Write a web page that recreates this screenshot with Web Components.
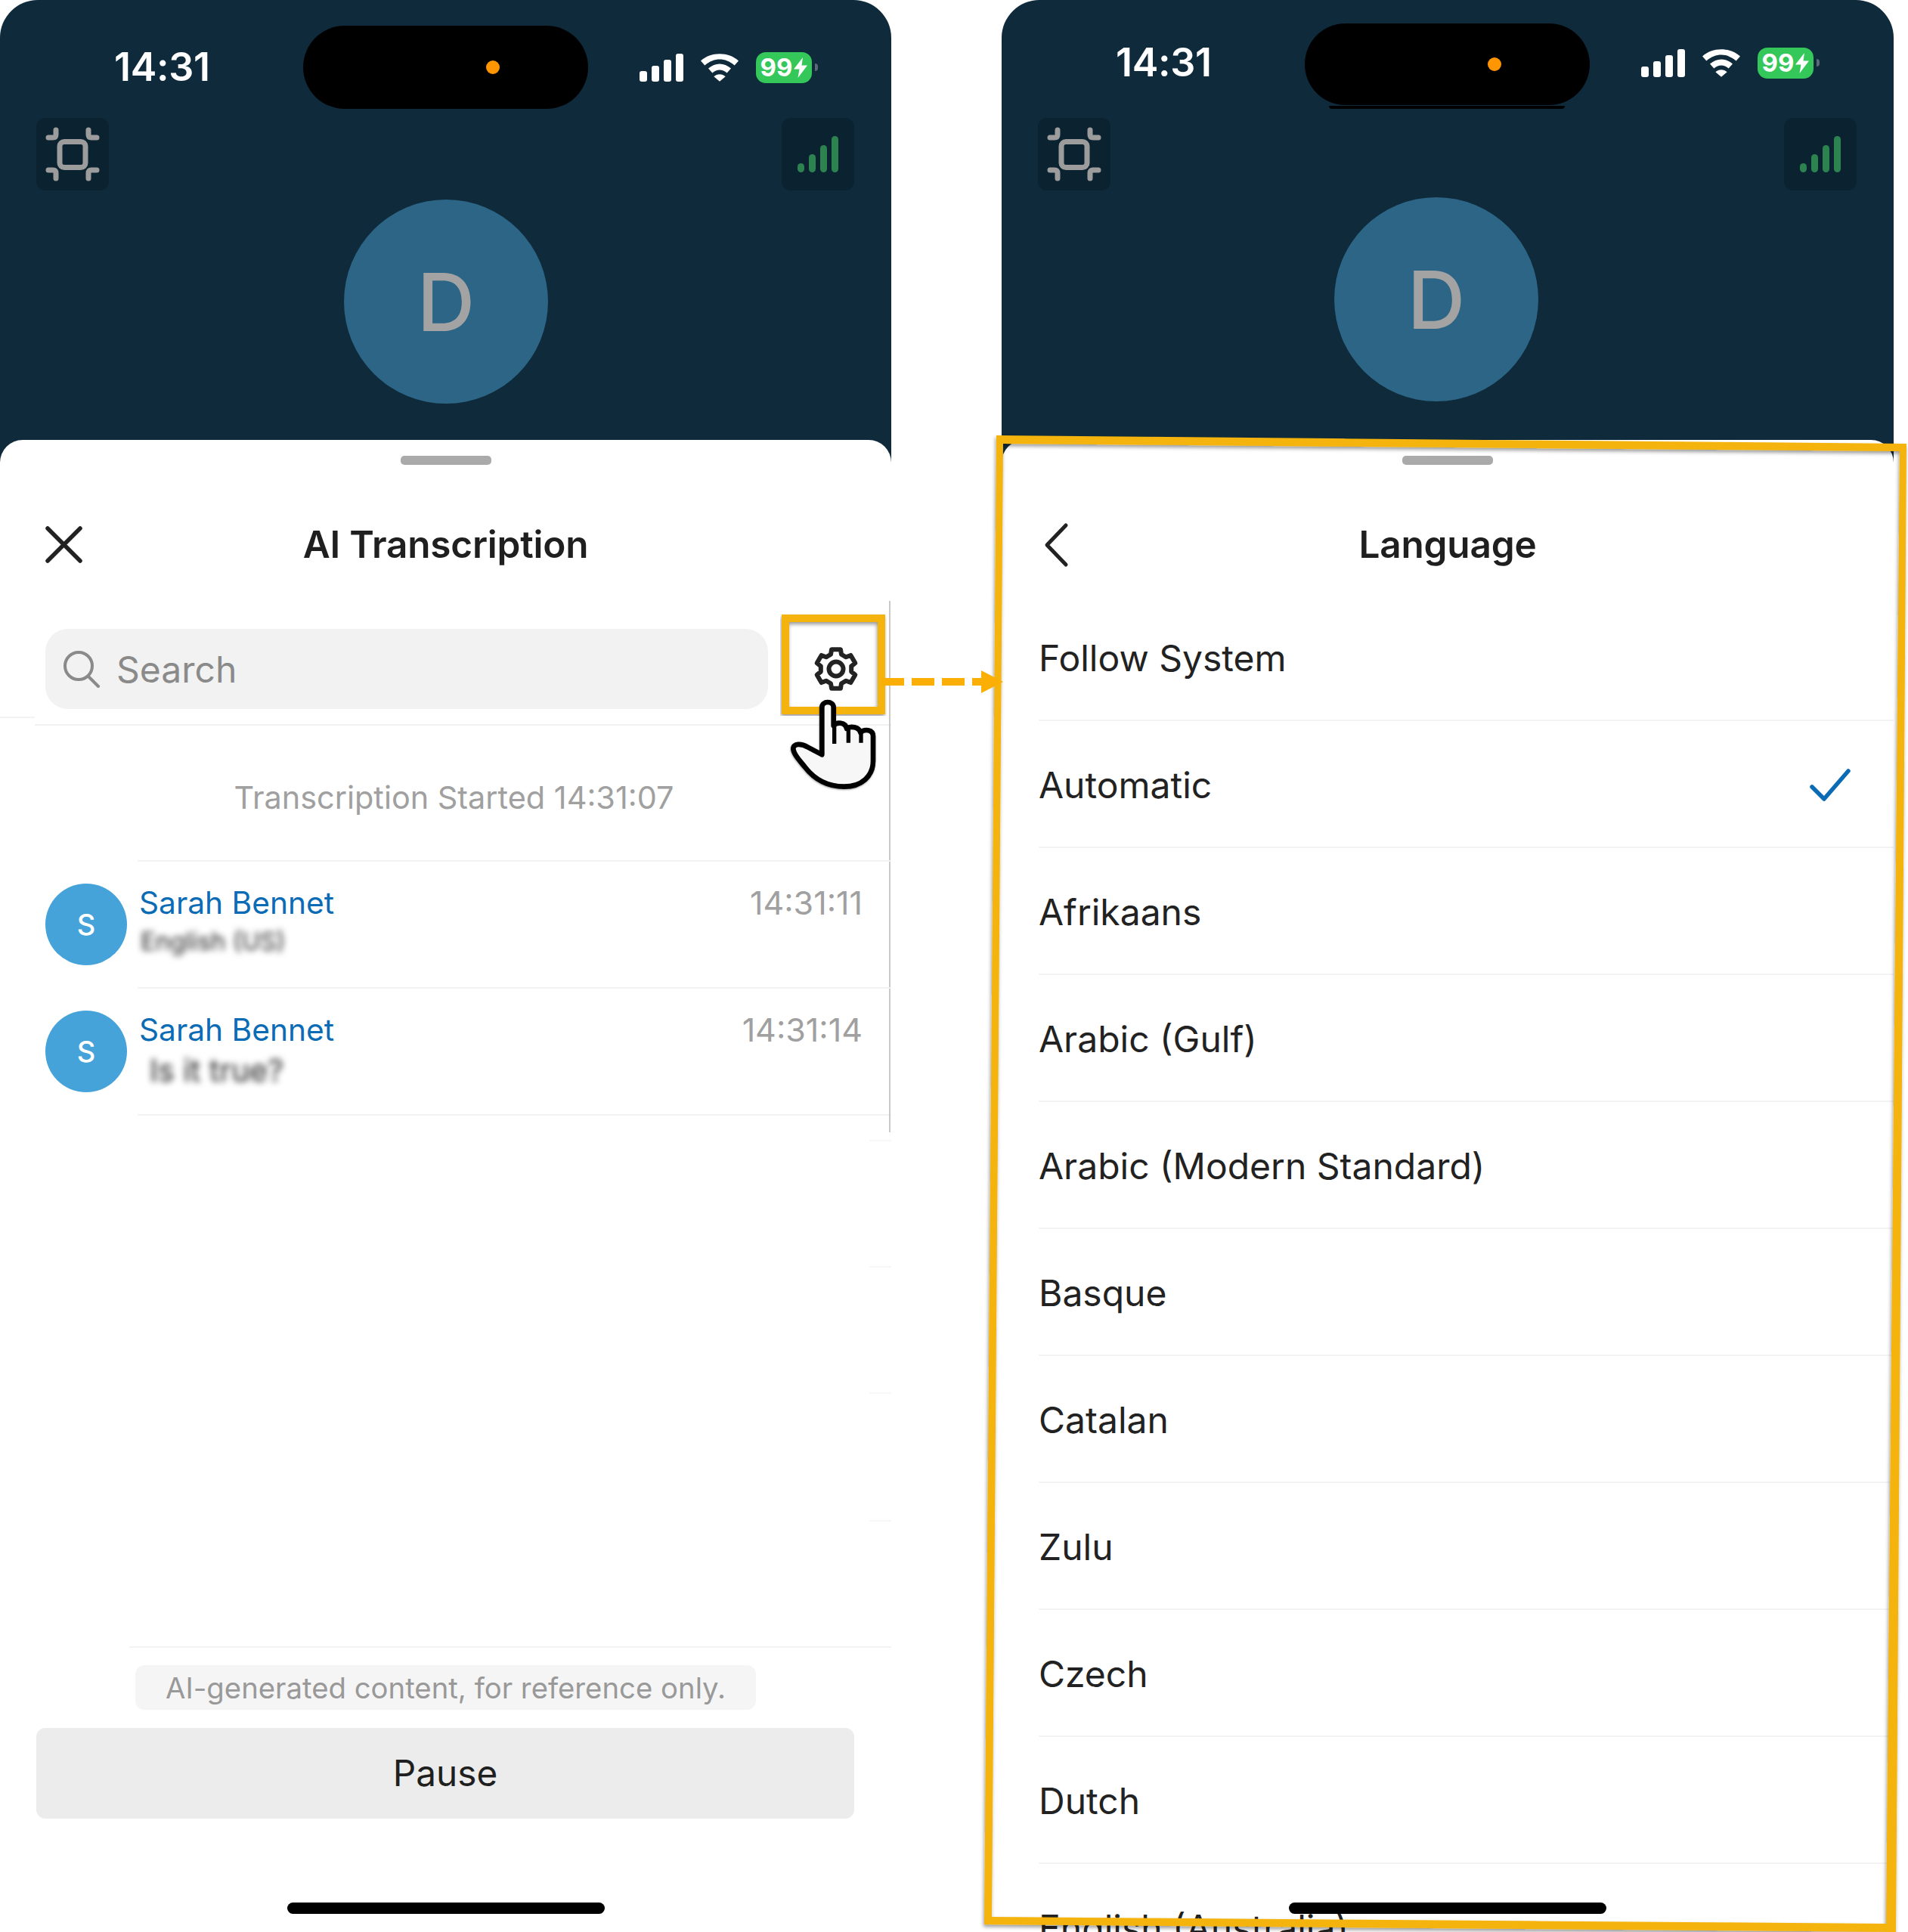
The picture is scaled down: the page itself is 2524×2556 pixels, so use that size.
<!DOCTYPE html>
<html lang="en"><head><meta charset="utf-8"><title>AI Transcription</title>
<style>
html,body{margin:0;padding:0;background:#fff}
body{width:2524px;height:2556px;overflow:hidden;position:relative;font-family:Inter,"Liberation Sans",sans-serif;color:#1f1f1f}
.stage{display:flex;gap:146px;align-items:flex-start}
</style></head><body>
<template id="t-status">
<style>
:host{display:block;height:156px;box-sizing:border-box;padding-top:var(--island-top,34px)}
.bar{display:flex;align-items:center;height:var(--island-h,110px);padding-left:151px}
.time{width:250px;flex:none;color:#fff;font:600 52px Inter,sans-serif;letter-spacing:-.3px;position:relative;top:-1px;margin-top:var(--icons-up,0)}
.island{width:377px;height:100%;background:#000;border-radius:55px;flex:none;display:flex;align-items:center;justify-content:flex-end;padding-right:117px;box-sizing:border-box}
.dot{width:18px;height:18px;border-radius:50%;background:#ff9500}
.signal{margin-left:68px;margin-top:var(--icons-up,0);display:flex;align-items:flex-end;gap:6px;height:37px}
.signal i{display:block;width:10px;background:#fff;border-radius:3px}
.wifi{width:50px;height:37px;margin-left:23px;margin-top:var(--icons-up,0);display:block}
.bat{margin-left:23px;margin-top:var(--icons-up,0);width:74px;height:41px;border-radius:13px;background:#34c759;display:flex;align-items:center;justify-content:center;gap:2px;color:#fff;font:700 33px Inter,sans-serif;box-sizing:border-box}
.bat svg{width:18px;height:27px;display:block}
.nub{width:4px;height:10px;margin-left:4px;margin-top:var(--icons-up,0);background:#5b6a76;border-radius:0 5px 5px 0}
.sliver{display:var(--sliver,none);height:4px;width:312px;margin:1px 0 0 433px;background:#000;border-radius:0 0 30px 30px}
</style>
<div class="bar"><span class="time">14:31</span><div class="island"><span class="dot"></span></div>
<div class="signal"><i style="height:14px"></i><i style="height:21px"></i><i style="height:29px"></i><i style="height:37px"></i></div>
<svg class="wifi" viewBox="0 0 150 110"><path fill="#fff" d="M0 28C40-9 110-9 150 28L134 46C96 14 54 14 16 46ZM30 58C58 34 92 34 120 58L104 76C86 60 64 60 46 76ZM52 90C65 78 85 78 98 90L75 110Z"/></svg>
<div class="bat"><span>99</span><svg viewBox="0 0 18 27"><path fill="#fff" d="M12 0 0 15.500H7.500L5.500 27 18 10.500H10.500Z"/></svg></div><span class="nub"></span></div>
<div class="sliver"></div>
</template>

<template id="t-controls">
<style>
:host{display:flex;justify-content:space-between;padding:0 49px 0 48px;height:96px}
.b{width:96px;height:96px;border-radius:12px;background:#0b2230;display:flex;align-items:center;justify-content:center}
svg{width:96px;height:96px;display:block}
.bars{display:flex;align-items:flex-end;gap:6px;height:48px}
.bars i{display:block;width:9px;background:#2c8350;border-radius:5px}
</style>
<div class="b"><svg viewBox="0 0 96 96" fill="none" stroke="#9c9c9c" stroke-width="7" stroke-linecap="round"><rect x="31" y="31.500" width="34" height="34" rx="6"/><path d="M26 16V22Q26 26 22 26H16M69 16V22Q69 26 73 26H80M16 69H22Q26 69 26 73V80M80 69H73Q69 69 69 73V80"/></svg></div>
<div class="b"><div class="bars"><i style="height:12px"></i><i style="height:24px"></i><i style="height:36px"></i><i style="height:48px"></i></div></div>
</template>

<template id="t-avatar">
<style>
:host{display:flex;width:270px;height:270px;margin:var(--avatar-top,12px) 0 0 var(--avatar-left,455px);border-radius:50%;background:#2c6585;color:#a3a3a3;align-items:center;justify-content:center;font:500 106px Inter,sans-serif}
</style><slot></slot>
</template>

<template id="t-phone">
<style>
:host{display:block;height:2556px;overflow:hidden;position:relative;background:#fff;border-radius:50px 50px 0 0}
.top{background:#0e2a3b;height:620px}
.sheet{margin-top:-38px;position:relative;background:#fff;border-radius:30px 30px 0 0;height:1974px;overflow:hidden;padding-top:21px;box-sizing:border-box}
.handle{width:120px;height:12px;border-radius:5px;background:#aaa;margin:0 auto}
.hb{position:absolute;left:50%;bottom:24px;width:420px;height:15px;margin-left:-210px;background:#000;border-radius:8px}
</style>
<div class="top"><slot name="top"></slot></div>
<div class="sheet"><div class="handle"></div><slot></slot><div class="hb"></div></div>
</template>

<template id="t-head">
<style>
:host{display:grid;grid-template-columns:1fr auto 1fr;align-items:center;height:84px;margin-top:64px;padding:0 60px;font:600 49.500px Inter,sans-serif;color:#1f1f1f;letter-spacing:-.2px}
::slotted(svg){display:block}
.t{position:relative;top:-1px}
</style><div><slot name="icon"></slot></div><div class="t"><slot></slot></div><div></div>
</template>

<template id="t-search">
<style>
:host{display:block;margin-top:69px;position:relative}
.row{display:flex;align-items:center;padding-left:60px}
.box{width:956px;height:106px;border-radius:30px;background:#f2f2f2;display:flex;align-items:center;gap:21px;padding-left:23px;box-sizing:border-box;color:#8a8a8a;font:400 48px Inter,sans-serif}
.box svg{width:50px;height:50px;display:block;flex:none}
.gear{margin-left:60px;width:60px;height:60px;flex:none;display:block}
.frag{width:46px;height:2px;margin-top:10px;background:#f3f3f3}
.rule{margin:8px 0 0 46px;height:2px;background:#f1f1f1}
.scroll{position:absolute;right:1px;top:-37px;width:2px;height:703px;background:#c9c9c9}
</style>
<div class="row"><div class="box"><svg viewBox="0 0 50 50" fill="none" stroke="#8a8a8a" stroke-width="4" stroke-linecap="round"><circle cx="21" cy="21" r="18"/><path d="M34 35 47 48"/></svg><slot></slot></div>
<svg class="gear" id="gear" viewBox="-30 -30 60 60" fill="none" stroke="#232323" stroke-width="6" stroke-linejoin="round"><path id="gp"/><circle r="9.500"/></svg></div>
<div class="frag"></div><div class="rule"></div><div class="scroll"></div>
</template>

<template id="t-started">
<style>
:host{display:flex;height:178px;box-sizing:border-box;padding:12px 0 0 22px;align-items:center;justify-content:center;color:#a0a0a0;font:400 41.400px Inter,sans-serif}
</style><slot></slot>
</template>

<template id="t-trow">
<style>
:host{display:flex;height:168px;box-sizing:border-box;padding-left:60px}
.av{width:108px;height:108px;margin-top:31px;flex:none;border-radius:50%;background:#45a3da;color:#fff;display:flex;align-items:center;justify-content:center;font:500 38px Inter,sans-serif}
.main{flex:1;margin-left:14px;border-top:2px solid #f3f3f3;padding:29px 38px 0 2px;position:relative}
.l{display:flex;justify-content:space-between;align-items:center;height:50px}
.n{color:#0b6cb5;font:400 40.700px Inter,sans-serif}.tm{color:#a0a0a0;font:400 43px Inter,sans-serif}
.m{font:400 var(--msg-size,33px) Inter,sans-serif;color:#222;filter:blur(4px);margin:var(--msg-top,4px) 0 0 var(--msg-left,2px);line-height:44px}
</style>
<div class="av"><slot name="initial"></slot></div>
<div class="main"><div class="l"><span class="n"><slot name="name"></slot></span><span class="tm"><slot name="time"></slot></span></div><div class="m"><slot></slot></div></div>
</template>

<template id="t-rule">
<style>
:host{display:block;height:2px;background:var(--c,#f3f3f3);margin:var(--mt,0) 0 0 var(--ml,0)}
</style>
</template>

<template id="t-foot">
<style>
:host{display:block}
.pill{width:max-content;margin:23px auto 0;height:59px;padding:0 40px;display:flex;align-items:center;border-radius:12px;background:#f5f5f5;color:#999;font:400 38.300px Inter,sans-serif}
.btn{margin:24px 49px 0 48px;height:120px;border-radius:12px;background:#ececec;display:flex;align-items:center;justify-content:center;font:400 47.700px Inter,sans-serif;color:#1f1f1f}
</style>
<div class="pill"><slot name="note"></slot></div><div class="btn"><slot></slot></div>
</template>

<template id="t-lang">
<style>
:host{display:flex;height:168px;box-sizing:border-box;margin-left:49px;border-bottom:2px solid #f3f3f3;padding:2px 57px 0 0;align-items:center;justify-content:space-between;font:400 48px Inter,sans-serif;color:#222}
svg{width:54px;height:43px;display:var(--check,none)}
</style>
<span><slot></slot></span><svg viewBox="0 0 54 43" fill="none" stroke="#0b6cb5" stroke-width="5.500" stroke-linecap="round" stroke-linejoin="round"><path d="M3 24 19 40 51 3"/></svg>
</template>

<template id="t-anno">
<style>
:host{display:block;position:absolute;left:0;top:0;width:2524px;height:2556px;pointer-events:none}
svg{display:block}
</style>
<svg width="2524" height="2556" viewBox="0 0 2524 2556">
<defs><filter id="s" x="-5%" y="-5%" width="110%" height="110%"><feDropShadow dx="-1" dy="3" stdDeviation="2.500" flood-color="#000" flood-opacity=".4"/></filter></defs>
<path filter="url(#s)" fill="#f5b309" fill-rule="evenodd" d="M1318 576 2522 587 2508 2556 1302 2546ZM1327 587 1312 2536 2495 2545 2513 597Z"/>
<rect filter="url(#s)" x="1039" y="818" width="127" height="122" fill="none" stroke="#f5b309" stroke-width="10"/>
<g fill="#fbaf05"><rect x="1166" y="897" width="30" height="10"/><rect x="1206" y="897" width="30" height="10"/><rect x="1246" y="897" width="30" height="10"/><rect x="1286" y="897" width="13" height="10"/><path d="M1298 887 1327 902 1298 917Z"/></g>
<g transform="translate(980 780) scale(.33333)" filter="url(#s)">
<path fill="#f7f7f7" stroke="#000" stroke-width="20" stroke-linejoin="round" d="M322 655V468C322 440 368 440 368 468V540C380 525 415 525 420 552C435 540 470 545 475 568C490 552 525 555 525 582V680C525 740 480 782 410 782C340 782 290 750 255 705C235 680 210 655 208 632C208 610 240 610 265 625Z"/>
<path stroke="#000" stroke-width="16" d="M371 540V612M427 552V608M477 568V608"/>
</g>
</svg>
</template>

<div class="stage">
<phone-frame style="width:1179px;flex:none">
 <div slot="top"><status-bar></status-bar><call-controls></call-controls><caller-avatar>D</caller-avatar></div>
 <sheet-head><svg slot="icon" width="50" height="50" viewBox="0 0 50 50" fill="none" stroke="#222" stroke-width="5.500" stroke-linecap="round"><path d="M3 3 46 46M46 3 3 46"/></svg>AI Transcription</sheet-head>
 <search-row>Search</search-row>
 <started-note>Transcription Started 14:31:07</started-note>
 <transcript-row><span slot="initial">S</span><span slot="name">Sarah Bennet</span><span slot="time">14:31:11</span>English (US)</transcript-row>
 <transcript-row style="--msg-top:7px;--msg-left:14px;--msg-size:41px"><span slot="initial">S</span><span slot="name">Sarah Bennet</span><span slot="time">14:31:14</span>Is it true?</transcript-row>
 <thin-rule style="--ml:182px"></thin-rule>
 <thin-rule style="--ml:1150px;--mt:32px;--c:#f7f7f7"></thin-rule>
 <thin-rule style="--ml:1150px;--mt:165px;--c:#f7f7f7"></thin-rule>
 <thin-rule style="--ml:1150px;--mt:165px;--c:#f7f7f7"></thin-rule>
 <thin-rule style="--ml:1150px;--mt:167px;--c:#f7f7f7"></thin-rule>
 <thin-rule style="--ml:171px;--mt:165px"></thin-rule>
 <sheet-foot><span slot="note">AI-generated content, for reference only.</span>Pause</sheet-foot>
</phone-frame>
<phone-frame style="width:1180px;flex:none;--island-top:31px;--island-h:108px;--avatar-top:9px;--avatar-left:440px;--sliver:block;--icons-up:-4px">
 <div slot="top"><status-bar></status-bar><call-controls></call-controls><caller-avatar>D</caller-avatar></div>
 <sheet-head><svg slot="icon" style="margin-left:-5px" width="40" height="60" viewBox="0 0 40 60" fill="none" stroke="#222" stroke-width="5" stroke-linecap="round" stroke-linejoin="round"><path d="M30 4 5 30 30 56"/></svg>Language</sheet-head>
 <div style="height:23px"></div>
 <lang-row>Follow System</lang-row>
 <lang-row style="--check:block">Automatic</lang-row>
 <lang-row>Afrikaans</lang-row>
 <lang-row>Arabic (Gulf)</lang-row>
 <lang-row>Arabic (Modern Standard)</lang-row>
 <lang-row>Basque</lang-row>
 <lang-row>Catalan</lang-row>
 <lang-row>Zulu</lang-row>
 <lang-row>Czech</lang-row>
 <lang-row>Dutch</lang-row>
 <lang-row>English (Australia)</lang-row>
</phone-frame>
</div>
<annotation-layer></annotation-layer>
<script>
function def(tag,tid,init){
  customElements.define(tag,class extends HTMLElement{
    constructor(){super();const r=this.attachShadow({mode:'open'});r.appendChild(document.getElementById(tid).content.cloneNode(true));if(init)init(r);}
  });
}
def('status-bar','t-status');
def('call-controls','t-controls');
def('caller-avatar','t-avatar');
def('phone-frame','t-phone');
def('sheet-head','t-head');
def('search-row','t-search',r=>{
  const pts=[];
  for(let i=0;i<6;i++){const a=i*60-90;
    [[20.5,-20],[26.5,-13],[26.5,13],[20.5,20]].forEach(([R,d])=>{const t=(a+d)*Math.PI/180;pts.push((R*Math.cos(t)).toFixed(2)+' '+(R*Math.sin(t)).toFixed(2));});
  }
  r.getElementById('gp').setAttribute('d','M'+pts.join('L')+'Z');
});
def('started-note','t-started');
def('transcript-row','t-trow');
def('thin-rule','t-rule');
def('sheet-foot','t-foot');
def('lang-row','t-lang');
def('annotation-layer','t-anno');
</script>
</body></html>
